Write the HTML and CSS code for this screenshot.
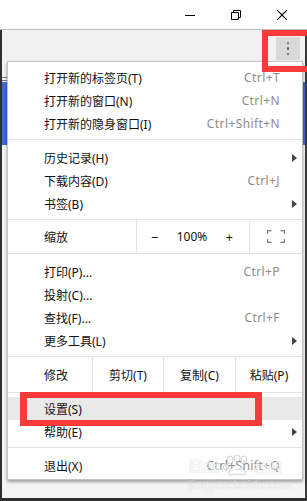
FILE: index.html
```html
<!DOCTYPE html>
<html lang="zh-CN">
<head>
<meta charset="utf-8">
<title>Chrome 菜单</title>
<link rel="stylesheet" href="styles.css">
</head>
<body>
<div class="window">
  <div class="titlebar">
    <div class="ctrl">
      <svg width="10" height="10" viewBox="0 0 10 10"><path d="M0 5.5H10" stroke="#000" stroke-width="1" fill="none"/></svg>
    </div>
    <div class="ctrl">
      <svg width="10" height="10" viewBox="0 0 10 10"><path d="M0.5 2.5H7.5V9.5H0.5Z M2.5 2.5V0.5H9.5V7.5H7.5" stroke="#000" stroke-width="1" fill="none"/></svg>
    </div>
    <div class="ctrl">
      <svg width="10" height="10" viewBox="0 0 10 10"><path d="M0 0L10 10M10 0L0 10" stroke="#000" stroke-width="1.1" fill="none"/></svg>
    </div>
  </div>
  <div class="frame">
    <div class="toolbar">
      <div class="kebab"><span class="dot"></span><span class="dot"></span><span class="dot"></span></div>
    </div>
    <div class="bookmarks"><span class="bm-icon"></span></div>
    <div class="banner"></div>
    <div class="pagebody"></div>
  </div>

  <div class="menu">
    <div class="item"><span class="label">打开新的标签页(T)</span><span class="key">Ctrl+T</span></div>
    <div class="item"><span class="label">打开新的窗口(N)</span><span class="key">Ctrl+N</span></div>
    <div class="item"><span class="label">打开新的隐身窗口(I)</span><span class="key">Ctrl+Shift+N</span></div>
    <div class="sep"></div>
    <div class="item"><span class="label">历史记录(H)</span><span class="arrow"></span></div>
    <div class="item"><span class="label">下载内容(D)</span><span class="key">Ctrl+J</span></div>
    <div class="item"><span class="label">书签(B)</span><span class="arrow"></span></div>
    <div class="sep sep-top"></div>
    <div class="zoomrow">
      <div class="zlabel">缩放</div>
      <div class="zctrl"><span class="zminus">−</span><span class="zval">100%</span><span class="zplus">+</span></div>
      <div class="zfull">
        <svg width="18" height="13" viewBox="0 0 18 13"><path d="M0.5 4V0.5H4.5M13.5 0.5H17.5V4M17.5 9V12.5H13.5M4.5 12.5H0.5V9" stroke="#7a7a7a" stroke-width="1.3" fill="none"/></svg>
      </div>
    </div>
    <div class="sep sep-bottom"></div>
    <div class="item"><span class="label">打印(P)...</span><span class="key">Ctrl+P</span></div>
    <div class="item"><span class="label">投射(C)...</span></div>
    <div class="item"><span class="label">查找(F)...</span><span class="key">Ctrl+F</span></div>
    <div class="item"><span class="label">更多工具(L)</span><span class="arrow"></span></div>
    <div class="sep sep-top"></div>
    <div class="editrow">
      <div class="elabel">修改</div>
      <div class="ecell ecut">剪切(T)</div>
      <div class="ecell ecopy">复制(C)</div>
      <div class="ecell epaste">粘贴(P)</div>
    </div>
    <div class="sep sep-after-edit"></div>
    <div class="item hover"><span class="label">设置(S)</span></div>
    <div class="item"><span class="label">帮助(E)</span><span class="arrow"></span></div>
    <div class="sep"></div>
    <div class="item"><span class="label">退出(X)</span><span class="key">Ctrl+Shift+Q</span></div>
  </div>

  <div class="mark mark-kebab"></div>
  <div class="mark mark-settings"></div>

  <div class="watermark">
    <div class="wm-logo">
      <span>Bai</span>
      <svg class="wm-paw" width="30" height="22" viewBox="0 0 30 22">
        <g fill="rgba(255,255,255,0.85)" stroke="rgba(120,120,120,0.5)" stroke-width="1">
          <ellipse cx="8" cy="5" rx="3" ry="4"/>
          <ellipse cx="15" cy="3.5" rx="3" ry="3.5"/>
          <ellipse cx="22" cy="5" rx="3" ry="4"/>
          <ellipse cx="4" cy="12" rx="2.5" ry="3.5"/>
          <path d="M8 20C6 20 6 16 9 14C11 12 12 10 15 10C18 10 19 12 21 14C24 16 24 20 22 20C19 20 17 19 15 19C13 19 11 20 8 20Z"/>
        </g>
      </svg>
      <span class="wm-cn">经验</span>
    </div>
    <div class="wm-url">jingyan.baidu.com</div>
  </div>
</div>
</body>
</html>
```

FILE: styles.css
```css
* { box-sizing: border-box; }

html, body {
  margin: 0;
  padding: 0;
}

body {
  width: 307px;
  height: 501px;
  overflow: hidden;
  font-family: "Noto Sans", "Noto Sans CJK SC", sans-serif;
  font-size: 12px;
  color: #111;
  background: #f3f3f3;
}

.window {
  position: relative;
  width: 307px;
  height: 501px;
  display: flex;
  flex-direction: column;
  overflow: hidden;
}

.titlebar {
  height: 30px;
  flex: none;
  background: #fff;
  border-bottom: 1px solid #bcbcbc;
  display: flex;
  justify-content: flex-end;
  padding-right: 2px;
}

.ctrl {
  width: 46px;
  height: 29px;
  display: flex;
  align-items: center;
  justify-content: center;
}

.ctrl svg { display: block; }

.frame {
  flex: 1;
  display: flex;
  flex-direction: column;
  border-left: 2px solid #2f2f2f;
  border-right: 2px solid #3a3a3a;
  border-bottom: 3px solid #2f2f2f;
  background: #f3f3f3;
}

.toolbar {
  height: 40px;
  flex: none;
  background: #f2f2f2;
  display: flex;
  justify-content: flex-end;
  align-items: flex-start;
  padding: 7px 5px 0 0;
}

.kebab {
  width: 24px;
  height: 23px;
  background: #d9d9d9;
  border-radius: 2px;
  display: flex;
  flex-direction: column;
  align-items: center;
  justify-content: center;
  gap: 3px;
}

.dot {
  width: 2.5px;
  height: 2.5px;
  border-radius: 50%;
  background: #5a5a5a;
}

.bookmarks {
  height: 12px;
  flex: none;
  background: #f2f2f2;
  display: flex;
  align-items: flex-end;
  padding-bottom: 1px;
}

.bm-icon {
  width: 5px;
  height: 4px;
  border-top: 1px solid #777;
  border-bottom: 1px solid #777;
}

.banner {
  height: 63px;
  flex: none;
  background: #3a6bd3;
}

.pagebody {
  flex: 1;
  background: #f4f4f4;
}

/* menu overlay */
.menu {
  position: absolute;
  left: 7px;
  top: 61px;
  width: 296px;
  background: #fff;
  border: 1px solid #c4c4c4;
  box-shadow: 0 2px 3px rgba(0, 0, 0, 0.35);
  padding: 4px 0 2px;
}

.item {
  height: 23px;
  display: flex;
  align-items: center;
  padding-left: 36px;
  white-space: nowrap;
}

.item.hover { background: #e9e9e9; }

.label { flex: 1; color: #111; }

.key {
  color: #8c8c8c;
  padding-right: 22px;
  letter-spacing: 0.4px;
}

.arrow {
  width: 0;
  height: 0;
  border-left: 5px solid #444;
  border-top: 4px solid transparent;
  border-bottom: 4px solid transparent;
  margin-right: 5px;
}

.sep {
  height: 1px;
  background: #e3e3e3;
  margin: 4px 0 6px;
}

.sep.sep-top { margin: 4px 0 0; }
.sep.sep-bottom { margin: 0 0 6px; }
.sep.sep-after-edit { margin: 0 0 4px; }

.zoomrow {
  height: 33px;
  display: flex;
}

.zlabel {
  width: 128px;
  padding-left: 36px;
  display: flex;
  align-items: center;
}

.zctrl {
  width: 114px;
  border-left: 1px solid #e3e3e3;
  border-right: 1px solid #e3e3e3;
  display: flex;
  align-items: center;
  justify-content: space-between;
  padding: 0 16px 0 14px;
  color: #111;
}

.zminus, .zplus { font-size: 13px; }

.zfull {
  flex: 1;
  display: flex;
  align-items: center;
  justify-content: center;
}

.zfull svg { display: block; }

.editrow {
  height: 35px;
  display: flex;
}

.elabel {
  width: 84px;
  padding-left: 36px;
  display: flex;
  align-items: center;
}

.ecell {
  display: flex;
  align-items: center;
  justify-content: center;
  border-left: 1px solid #e3e3e3;
}

.ecut { width: 71px; }
.ecopy { width: 72px; }
.epaste { width: 67px; }

/* red annotation boxes */
.mark {
  position: absolute;
  border: 6px solid #fb3a3a;
}

.mark-kebab {
  left: 262px;
  top: 30px;
  width: 52px;
  height: 42px;
}

.mark-settings {
  left: 20px;
  top: 392px;
  width: 242px;
  height: 34px;
  border-width: 6px 7px;
}

/* watermark */
.watermark {
  position: absolute;
  left: 189px;
  top: 454px;
  color: rgba(255, 255, 255, 0.85);
  text-shadow: 0 0 1px rgba(110, 110, 110, 0.45);
  pointer-events: none;
  opacity: 0.7;
}

.wm-logo {
  display: flex;
  align-items: center;
  font-family: "Liberation Sans", sans-serif;
  font-size: 20px;
  font-weight: bold;
  line-height: 24px;
}

.wm-paw { display: block; margin: 0 2px 0 2px; }

.wm-cn {
  font-family: "Noto Sans CJK SC", sans-serif;
  font-size: 14px;
  font-weight: bold;
}

.wm-url {
  font-family: "Liberation Sans", sans-serif;
  font-size: 12px;
  line-height: 14px;
  opacity: 0.8;
  letter-spacing: 0.4px;
}
```
